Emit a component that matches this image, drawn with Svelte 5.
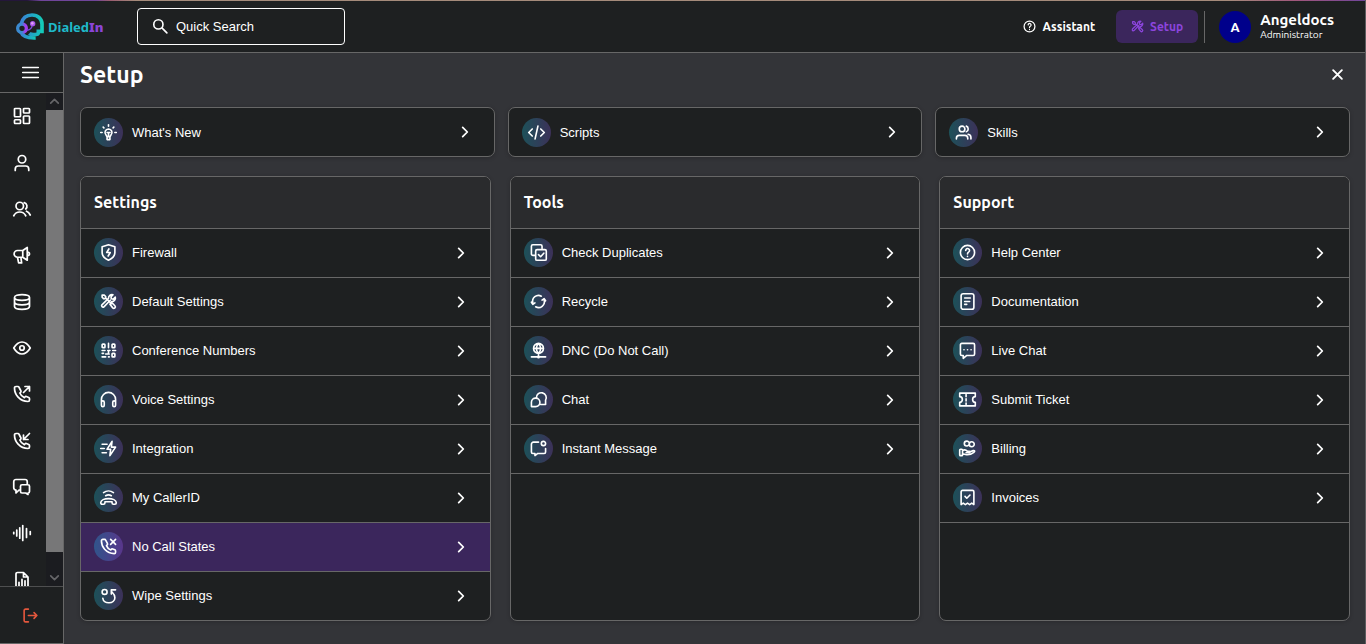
<script lang="ts">
    type Item = {
        label: string;
        icon: string;
    };

    type Group = {
        title: string;
        items: Item[];
    };

    const circle = (x: number, y: number, r: number) =>
        `M${x - r} ${y}a${r} ${r} 0 1 0 ${2 * r} 0a${r} ${r} 0 1 0 ${-2 * r} 0`;

    const rect = (x: number, y: number, w: number, h: number, r = 1) =>
        `M${x + r} ${y}h${w - 2 * r}a${r} ${r} 0 0 1 ${r} ${r}v${h - 2 * r}a${r} ${r} 0 0 1 ${-r} ${r}h${2 * r - w}a${r} ${r} 0 0 1 ${-r} ${-r}v${2 * r - h}a${r} ${r} 0 0 1 ${r} ${-r}z`;

    const phone =
        "M6.5 2H4a2 2 0 0 0-2 2c0 4 1 8 4.5 11.8S15 22 20 22a2 2 0 0 0 2-2v-1.8a1.6 1.6 0 0 0-1-1.5l-3.2-1.3a1.6 1.6 0 0 0-1.8.5l-.8 1c-2.8-1.1-5-3.5-6.1-6.2l1-.9a1.6 1.6 0 0 0 .5-1.8L8 3a1.6 1.6 0 0 0-1.5-1z";

    const tools =
        "M3 3h3l2 2v2l8 8M3 3v3l2 2h2M14.5 10.2l-9 9.3a2 2 0 0 1-2.8-2.8L12 7.6a5 5 0 0 1 6.3-5.2L15.5 5.4l.5 2.7 2.8.6 2.8-2.9a5 5 0 0 1-5.2 6.3M14 16l1-1.5 2-.5 4 4a2 2 0 0 1-3 3z";

    const icons: Record<string, string> = {
        dashboard: rect(2, 2, 8, 11) + rect(14, 2, 8, 6) + rect(2, 17, 8, 5) + rect(14, 12, 8, 10),
        user: circle(12, 7, 5) + "M3 22v-2a4 4 0 0 1 4-4h10a4 4 0 0 1 4 4v2",
        users: circle(9, 8, 5) + "M15 3.5a5 5 0 0 1 2 8.5M1 21c1.5-3 4.5-5 8-5s6.500 2 8 5M18 15c2 .8 4 3 5 5",
        megaphone: "M19 2v17l-6-4H6a4.5 4.5 0 0 1 0-9h7zM13 6v9M19 8c4 .5 4 4.5 0 5M6 15l1.5 7.5h4L10.500 15",
        database: "M2 6c0-5 20-5 20 0s-20 5-20 0v12c0 5 20 5 20 0V6M2 12c0 5 20 5 20 0",
        eye: "M1 12c3-5 7-8 11-8s8 3 11 8c-3 5-7 8-11 8s-8-3-11-8z" + circle(12, 12, 3),
        callOut: phone + "M14 10l8-8M16 2h6v6",
        callIn: phone + "M22 2l-8 8M14 4v6h6",
        chats: "M9 16H8l-4 4v-4a3 3 0 0 1-3-3V5a3 3 0 0 1 3-3h12a3 3 0 0 1 3 3v3M12 9h8a2 2 0 0 1 2 2v7a2 2 0 0 1-2 2v2l-3-2h-5a2 2 0 0 1-2-2v-7a2 2 0 0 1 2-2z",
        wave: "M1 11v2M5 8v8M9 5v14M13 2v20M18 6v12M23 10v4",
        report: "M14 2v6h6M6 2h8l6 6v12a2 2 0 0 1-2 2H6a2 2 0 0 1-2-2V4a2 2 0 0 1 2-2zM8 15v5M12 11v9M16 13v7",
        logout: "M9 3H5a2 2 0 0 0-2 2v14a2 2 0 0 0 2 2h4M9 12h12M17 8l4 4-4 4",
        bulb: "M12 7a5 5 0 0 0-3.5 8.5L10 18v4h4v-4l1.5-2.5A5 5 0 0 0 12 7zM10 18h4M10 12h4M12 12v5M12 1v2M4.5 4.5l1 1M19.5 4.5l-1 1M1 12h2M21 12h2",
        code: "M6 7l-5 5 5 5M18 7l5 5-5 5M14 3l-4 18",
        skills: circle(10, 7, 4) + "M16 3c3.5 1 3.5 7 0 8M2 21v-1a4 4 0 0 1 4-4h8a4 4 0 0 1 4 4v1M18.5 14.5c2.5.5 4 2 4 4.5v2",
        shield: "M12 1l9 3v8c0 5-3.5 8.5-9 11-5.5-2.5-9-6-9-11V4zM12.5 7L9.5 12h5L11.5 17",
        tools,
        qr: rect(3, 3, 4, 5) + rect(17, 3, 4, 5) + rect(17, 16, 4, 5) + "M12 2v6M3 12h4M11 12h3M18 12h4M12 12v4M3 16h2M8 17h5M3 21h5M12 21h1",
        headphones: "M2 18v-6a10 10 0 0 1 20 0v6" + rect(2, 14, 4, 8, 2) + rect(18, 14, 4, 8, 2),
        bolt: "M17 2l-7 11h5l-1 9 8-12h-6zM3 6h7M1 12h5M3 18h6",
        callerId: "M7 18v1.500a2 2 0 0 1-2 2H3a2 2 0 0 1-2-2c0-8 22-8 22 0a2 2 0 0 1-2 2h-2a2 2 0 0 1-2-2V18zM8 9.5c2.500-1.500 5.500-1.500 8 0M5 5c4-3 10-3 14 0",
        noCall: phone + "M15 2l7 7M22 2l-7 7",
        wipe: circle(6.5, 7, 3.5) + "M4 16c1 9 17 8 17-1 0-3-1-5-4-8M22 4h-6v6",
        duplicate: "M7 16H4a2 2 0 0 1-2-2V3a2 2 0 0 1 2-2h11a2 2 0 0 1 2 2v3" + rect(8, 8, 15, 15, 2) + "M12 15l3 3 4.5-5",
        recycle: "M4 14a8.3 8.3 0 0 1 12-9.500M20 10a8.300 8.300 0 0 1-12 9.500M2 13l2 3 3-2M22 11l-2-3-3 2",
        globe: circle(12, 9, 7) + "M5 9h14M12 2c-4 4-4 10 0 14M12 2c4 4 4 10 0 14M12 16v3M2 21h8M14 21h8" + circle(12, 21, 1),
        chat: "M9 10a7 7 0 1 1 13 3v6h-7M2 22v-6a6 6 0 1 1 6 6z",
        message: circle(19, 5, 3) + "M12 3H5a3 3 0 0 0-3 3v11a2 2 0 0 0 2 2h3v3l4-3h9a2 2 0 0 0 2-2v-5",
        help: circle(12, 12, 10) + "M9.5 9a2.7 2.7 0 1 1 4 2.500c-1 .6-1.5 1-1.500 2.500M12 17.500v.1",
        document: rect(3, 1, 18, 22, 3) + "M8 7h8M8 12h7M8 16h3",
        liveChat: "M4 2h16a2 2 0 0 1 2 2v13a2 2 0 0 1-2 2h-9l-5 4v-4H4a2 2 0 0 1-2-2V4a2 2 0 0 1 2-2zM7 11h.1M12 11h.1M17 11h.1",
        ticket: "M1 3h22v5c-5 0-5 8 0 8v5H1v-5c5 0 5-8 0-8zM10 5v3M10 11v3M10 17v2",
        billing: circle(11, 5, 3.5) + circle(18, 6, 3.5) + rect(1, 13, 4, 9) + "M5 15c3-2 5-1 7 1h3c1 0 1 2 0 2h-5M15 17l5-2c2-.5 3 1 1 2.5-4 3-8 4-12 3l-4-1",
        invoice: "M3 22V4a2 2 0 0 1 2-2h14a2 2 0 0 1 2 2v18l-3-2-3 2-3-2-3 2-3-2zM8.5 10.5l2.5 2.5 4.5-4.5",
        search: circle(9, 9, 6.5) + "M14 14l7 7",
        menu: "M1 5h22M1 12h22M1 19h22",
        close: "M5 5l14 14M19 5L5 19",
        chevron: "M8 4l8 8-8 8",
        up: "M5 15l7-7 7 7",
        down: "M5 9l7 7 7-7",
    };

    const nav: Item[] = [
        { label: "Dashboard", icon: "dashboard" },
        { label: "Agents", icon: "user" },
        { label: "Leads", icon: "users" },
        { label: "Campaigns", icon: "megaphone" },
        { label: "Data", icon: "database" },
        { label: "Monitor", icon: "eye" },
        { label: "Outbound", icon: "callOut" },
        { label: "Inbound", icon: "callIn" },
        { label: "Messages", icon: "chats" },
        { label: "Recordings", icon: "wave" },
        { label: "Reports", icon: "report" },
    ];

    const shortcuts: Item[] = [
        { label: "What's New", icon: "bulb" },
        { label: "Scripts", icon: "code" },
        { label: "Skills", icon: "skills" },
    ];

    const groups: Group[] = [
        {
            title: "Settings",
            items: [
                { label: "Firewall", icon: "shield" },
                { label: "Default Settings", icon: "tools" },
                { label: "Conference Numbers", icon: "qr" },
                { label: "Voice Settings", icon: "headphones" },
                { label: "Integration", icon: "bolt" },
                { label: "My CallerID", icon: "callerId" },
                { label: "No Call States", icon: "noCall" },
                { label: "Wipe Settings", icon: "wipe" },
            ],
        },
        {
            title: "Tools",
            items: [
                { label: "Check Duplicates", icon: "duplicate" },
                { label: "Recycle", icon: "recycle" },
                { label: "DNC (Do Not Call)", icon: "globe" },
                { label: "Chat", icon: "chat" },
                { label: "Instant Message", icon: "message" },
            ],
        },
        {
            title: "Support",
            items: [
                { label: "Help Center", icon: "help" },
                { label: "Documentation", icon: "document" },
                { label: "Live Chat", icon: "liveChat" },
                { label: "Submit Ticket", icon: "ticket" },
                { label: "Billing", icon: "billing" },
                { label: "Invoices", icon: "invoice" },
            ],
        },
    ];

    let search = $state("");
    let active = $state("No Call States");
</script>

{#snippet icon(name: string, size: number)}
    <svg class="icon" width={size} height={size} viewBox="0 0 24 24" aria-hidden="true">
        <path d={icons[name]} />
    </svg>
{/snippet}

{#snippet row(item: Item)}
    <button
        class="row"
        class:active={item.label === active}
        onclick={() => (active = item.label)}
    >
        <span class="badge">{@render icon(item.icon, 17)}</span>
        <span class="label">{item.label}</span>
        <span class="chevron">{@render icon("chevron", 14)}</span>
    </button>
{/snippet}

<div class="shell">
    <header>
        <a class="logo" href="#home">
            <svg width="28" height="28" viewBox="0 0 84 84" fill="none" aria-hidden="true">
                <defs>
                    <linearGradient id="head" x1="0" x2="1">
                        <stop offset="0" stop-color="#3b82d6" />
                        <stop offset="0.5" stop-color="#22a5c6" />
                        <stop offset="1" stop-color="#14c9b8" />
                    </linearGradient>
                    <linearGradient id="ear" x1="0" x2="1">
                        <stop offset="0.5" stop-color="#3b8ad0" />
                        <stop offset="0.9" stop-color="#a53df0" />
                    </linearGradient>
                </defs>
                <path d="M16 32C20 14 32 6 48 6c18 0 30 12 30 27v22H67v5c0 4-8 5-14 5s-10-1-13-4" stroke="url(#head)" stroke-width="11" />
                <path d="M14 56c5 13 20 20 45 19" stroke="url(#head)" stroke-width="11" />
                <circle cx="18" cy="46" r="13" stroke="url(#ear)" stroke-width="10" />
                <path d="M32 52c9-1 15-6 17-15" stroke="#7e4be0" stroke-width="4" />
                <circle cx="50" cy="32" r="8" fill="#a855ea" />
                <circle cx="49" cy="31" r="4" fill="#dfa0f5" />
            </svg>
            <span>Dialed<b>In</b></span>
        </a>

        <label class="search">
            {@render icon("search", 17)}
            <input type="text" placeholder="Quick Search" aria-label="Quick Search" bind:value={search} />
        </label>

        <div class="actions">
            <button class="action">{@render icon("help", 13)} Assistant</button>
            <button class="action current">{@render icon("tools", 13)} Setup</button>
            <button class="profile">
                <span class="avatar">A</span>
                <span class="who">
                    <strong>Angeldocs</strong>
                    <small>Administrator</small>
                </span>
            </button>
        </div>
    </header>

    <aside>
        <button class="menu" aria-label="Menu">{@render icon("menu", 17)}</button>
        <div class="scroller">
            <nav>
                {#each nav as item}
                    <a href="#{item.icon}" aria-label={item.label}>{@render icon(item.icon, 18)}</a>
                {/each}
            </nav>
            <div class="scrollbar" aria-hidden="true">
                <span class="arrow">{@render icon("up", 13)}</span>
                <span class="thumb"></span>
                <span class="arrow">{@render icon("down", 13)}</span>
            </div>
        </div>
        <button class="logout" aria-label="Log out">{@render icon("logout", 17)}</button>
    </aside>

    <main>
        <div class="heading">
            <h1>Setup</h1>
            <button class="close" aria-label="Close">{@render icon("close", 15)}</button>
        </div>

        <div class="shortcuts">
            {#each shortcuts as item}
                <div class="card">{@render row(item)}</div>
            {/each}
        </div>

        <div class="groups">
            {#each groups as group}
                <section class="card">
                    <h2>{group.title}</h2>
                    <ul>
                        {#each group.items as item}
                            <li>{@render row(item)}</li>
                        {/each}
                    </ul>
                </section>
            {/each}
        </div>
    </main>
</div>

<style>
    :global(body) {
        background-color: #333438;
    }

    .shell {
        display: grid;
        grid-template-columns: 64px 1fr;
        grid-template-rows: 53px 1fr;
        box-sizing: border-box;
        height: 100vh;
        border-right: 1px solid #5c5c5e;
        color: white;
        font-family: "Liberation Sans", Arial, sans-serif;
        font-size: 13px;
    }

    button {
        padding: 0;
        border: none;
        background: none;
        color: inherit;
        font: inherit;
        cursor: pointer;
    }

    .icon {
        flex: none;
        fill: none;
        stroke: currentColor;
        stroke-width: 2.3;
        stroke-linecap: round;
        stroke-linejoin: round;
        overflow: visible;
    }

    header {
        grid-column: 1 / -1;
        display: flex;
        align-items: center;
        box-sizing: border-box;
        padding: 1px 31px 0 16px;
        border-bottom: 1px solid #676767;
        background: linear-gradient(90deg, #24163a 0 2%, #70459a 3% 7%, #9a5b70 8%, #a58b7b 10% 90%, #a0567c 95%, #70459a) top / 100% 1px no-repeat #1e2021;
        font-family: Ubuntu, "Noto Sans", sans-serif;
    }

    .logo {
        display: flex;
        align-items: center;
        gap: 4px;
        width: 121px;
        color: #1fb9c9;
        font-family: "Noto Sans", sans-serif;
        font-size: 13px;
        font-weight: bold;
        text-decoration: none;
    }

    .logo svg {
        overflow: visible;
    }

    .logo b {
        color: #8b45d6;
    }

    .search {
        display: flex;
        align-items: center;
        gap: 7px;
        box-sizing: border-box;
        width: 208px;
        height: 37px;
        padding: 0 14px;
        border: 1px solid white;
        border-radius: 4px;
    }

    .search input {
        min-width: 0;
        flex: 1;
        padding: 0;
        border: none;
        outline: none;
        background: none;
        color: white;
        font-family: "Liberation Sans", Arial, sans-serif;
        font-size: 13px;
    }

    .search input::placeholder {
        color: white;
        opacity: 1;
    }

    .actions {
        display: flex;
        align-items: center;
        gap: 6px;
        margin-left: auto;
    }

    .action {
        display: flex;
        align-items: center;
        gap: 6px;
        height: 33px;
        padding: 0 15px;
        border-radius: 6px;
        font-size: 12px;
        font-weight: bold;
    }

    .action.current {
        background-color: #3b265c;
        color: #8c45dc;
    }

    .profile {
        display: flex;
        align-items: center;
        gap: 9px;
        height: 32px;
        padding-left: 14px;
        border-left: 1px solid #676767;
        text-align: left;
    }

    .avatar {
        display: grid;
        place-items: center;
        width: 32px;
        height: 32px;
        border-radius: 50%;
        background-color: #00008b;
        font-weight: bold;
    }

    .who {
        display: flex;
        flex-direction: column;
    }

    .who strong {
        font-size: 15px;
        line-height: 16px;
    }

    .who small {
        font-size: 10px;
        line-height: 14px;
    }

    aside {
        display: flex;
        flex-direction: column;
        min-height: 0;
        border-right: 1px solid #676767;
        border-bottom: 1px solid #676767;
        background-color: #1e2021;
    }

    .menu {
        display: grid;
        place-items: center;
        height: 40px;
        padding-right: 2px;
        border-bottom: 1px solid #676767;
    }

    .scroller {
        display: flex;
        flex: 1;
        min-height: 0;
        overflow: hidden;
    }

    nav {
        display: flex;
        flex: 1;
        flex-direction: column;
        min-height: 510px;
        padding-right: 2px;
    }

    nav a {
        display: grid;
        flex: 1;
        place-items: center;
        color: white;
    }

    .scrollbar {
        display: flex;
        flex-direction: column;
        width: 17px;
        background-color: #1b1c20;
    }

    .thumb {
        flex: 1;
        margin-bottom: 17px;
        background-color: #777778;
    }

    .arrow {
        display: grid;
        place-items: center;
        height: 17px;
        color: #666669;
    }

    .arrow .icon,
    .chevron .icon,
    .close .icon {
        stroke-width: 3;
    }

    .logout {
        display: grid;
        place-items: center;
        height: 57px;
        padding-right: 2px;
        border-top: 1px solid #4e4f50;
        color: #e4573d;
    }

    main {
        min-height: 0;
        padding: 0 15px 16px 16px;
    }

    .heading {
        display: flex;
        align-items: center;
        justify-content: space-between;
        height: 42px;
        margin-bottom: 12px;
        padding-right: 5px;
    }

    h1,
    h2 {
        margin: 0;
        font-family: Ubuntu, "Noto Sans", sans-serif;
        font-weight: bold;
    }

    h1 {
        font-size: 23px;
    }

    .close {
        display: grid;
        place-items: center;
    }

    .shortcuts,
    .groups {
        display: grid;
        grid-template-columns: repeat(3, 1fr);
    }

    .shortcuts {
        gap: 13px;
        margin-bottom: 19px;
    }

    .groups {
        gap: 19px;
    }

    .card {
        overflow: hidden;
        border: 1px solid #676767;
        border-radius: 7px;
        background-color: #1e2021;
        box-shadow: 0 1px 4px rgba(0, 0, 0, 0.2);
    }

    h2 {
        padding: 0 13px;
        border-bottom: 1px solid #676767;
        background-color: #2a2b2d;
        font-size: 16px;
        line-height: 51px;
    }

    ul {
        margin: 0;
        padding: 0;
        list-style: none;
    }

    li {
        border-bottom: 1px solid #676767;
    }

    li:nth-child(8) {
        border-bottom: none;
    }

    .row {
        display: flex;
        align-items: center;
        width: 100%;
        height: 48px;
        padding: 0 22px 0 13px;
        text-align: left;
    }

    li .row {
        padding-bottom: 1px;
    }

    .row:hover,
    .row.active {
        background-color: #3b265c;
    }

    .badge {
        display: grid;
        place-items: center;
        width: 29px;
        height: 29px;
        margin-right: 9px;
        border-radius: 50%;
        background: linear-gradient(90deg, #1d5159, #3c3159);
    }

    .active .badge {
        background: linear-gradient(90deg, #30558b, #59368b);
    }

    .label {
        flex: 1;
    }

    .chevron {
        display: grid;
    }
</style>
